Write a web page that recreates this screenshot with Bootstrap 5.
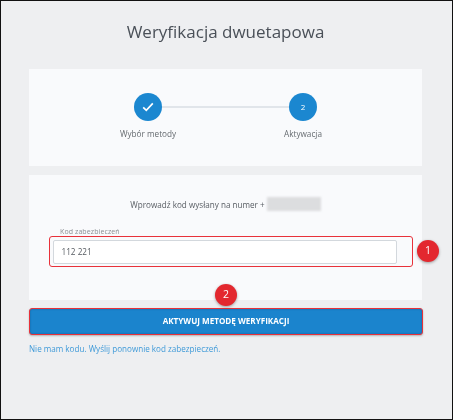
<!DOCTYPE html>
<html>

<head>
  <link href="https://cdn.jsdelivr.net/npm/bootstrap@5.3.2/dist/css/bootstrap.min.css" rel="stylesheet" type="text/css" />
  <script src="https://cdn.jsdelivr.net/npm/bootstrap@5.3.2/dist/js/bootstrap.bundle.min.js"></script>
  <style>
    html, body { height: 100%; }
    body { background: #eeeff1; font-family: "Open Sans", "Noto Sans", sans-serif; color: #555a60; overflow: hidden; }
    .page-frame { height: 420px; border: 1px solid #111; padding: 0 30px 0 28px; position: relative; filter: blur(.3px); }
    .page-title { font-size: 17px; font-weight: 400; color: #4a5058; text-align: center; line-height: 26px; margin: 0; padding: 18px 0 24px; }
    .panel-box { background: #f9fafc; }
    .steps-panel { height: 97px; padding: 24px 0 0; margin-bottom: 9px; }
    .steps-row { width: 183px; margin: 0 auto; position: relative; }
    .steps-line { position: absolute; top: 13px; left: 20px; right: 20px; height: 2px; background: #e1e5ea; }
    .step-item { width: 60px; font-size: 8.2px; color: #666b70; text-align: center; position: relative; white-space: nowrap; line-height: 12px; }
    .step-item-first { margin-left: -16px; }
    .step-item-last { margin-right: -16px; }
    .step-dot { width: 28px; height: 28px; border-radius: 50%; background: #1b87d0; color: #fff; font-size: 8px; margin: 0 auto 7px; }
    .code-panel { height: 125px; padding: 22px 20px 0; margin-bottom: 8px; }
    .code-info { font-size: 8.15px; color: #585d63; line-height: 14px; margin-bottom: 15px; }
    .phone-blur { display: inline-block; width: 54px; height: 14px; margin-left: 2px; background: #dcdddf; vertical-align: -3px; filter: blur(.8px); }
    .code-label { font-size: 7px; color: #8b8f94; line-height: 9px; padding-left: 11px; letter-spacing: .1px; }
    .code-mark { border: 1.5px solid #e8313a; border-radius: 3px; width: 364px; padding: 2.5px; }
    .code-input { height: 24px; width: 344px; background: #fff; border: 1px solid #d3d8dd; border-radius: 2px; font-size: 8.2px; padding: 0 8px; color: #555a60; line-height: 22px; }
    .go-btn { display: block; width: 394px; height: 27px; margin: 0; padding: 0; background: #1b84cd; color: #fff; border: 1.5px solid #e8313a; border-radius: 3px; font-size: 8.1px; font-weight: 700; box-shadow: 0 1px 2px rgba(0,0,0,.25), inset 0 0 2px rgba(0,60,110,.5); }
    .go-btn:hover { background: #1b84cd; color: #fff; border-color: #e8313a; }
    .resend-link { display: block; font-size: 8.1px; color: #3f9ad8; text-decoration: none; line-height: 12px; margin-top: 8px; }
    .mark-badge { position: absolute; width: 22px; height: 22px; border-radius: 50%; background: #e3282f; color: #fff; font-size: 10.5px; box-shadow: 0 1px 3px rgba(0,0,0,.35); }
    .badge-one { left: 416px; top: 239px; }
    .badge-two { left: 214px; top: 283px; }
  </style>
</head>

<body>
  <div class="page-frame">
    <h1 class="page-title">Weryfikacja dwuetapowa</h1>

    <div class="panel-box steps-panel">
      <div class="steps-row d-flex justify-content-between">
        <div class="steps-line"></div>
        <div class="step-item step-item-first">
          <div class="step-dot d-flex align-items-center justify-content-center">
            <svg width="12" height="10" viewBox="0 0 12 10" fill="none" stroke="#fff" stroke-width="1.7" aria-hidden="true">
              <path d="M1.2 5.4 4.3 8.4 10.8 1.4" />
            </svg>
          </div>
          Wybór metody
        </div>
        <div class="step-item step-item-last">
          <div class="step-dot d-flex align-items-center justify-content-center">2</div>
          Aktywacja
        </div>
      </div>
    </div>

    <div class="panel-box code-panel">
      <div class="code-info text-center">Wprowadź kod wysłany na numer +<span class="phone-blur"></span></div>
      <div class="code-label">Kod zabezbieczeń</div>
      <div class="code-mark">
        <div class="code-input">112 221</div>
      </div>
    </div>

    <button type="button" class="btn go-btn">AKTYWUJ METODĘ WERYFIKACJI</button>
    <a href="#" class="resend-link">Nie mam kodu. Wyślij ponownie kod zabezpieczeń.</a>

    <div class="mark-badge badge-one d-flex align-items-center justify-content-center">1</div>
    <div class="mark-badge badge-two d-flex align-items-center justify-content-center">2</div>
  </div>
</body>

</html>
